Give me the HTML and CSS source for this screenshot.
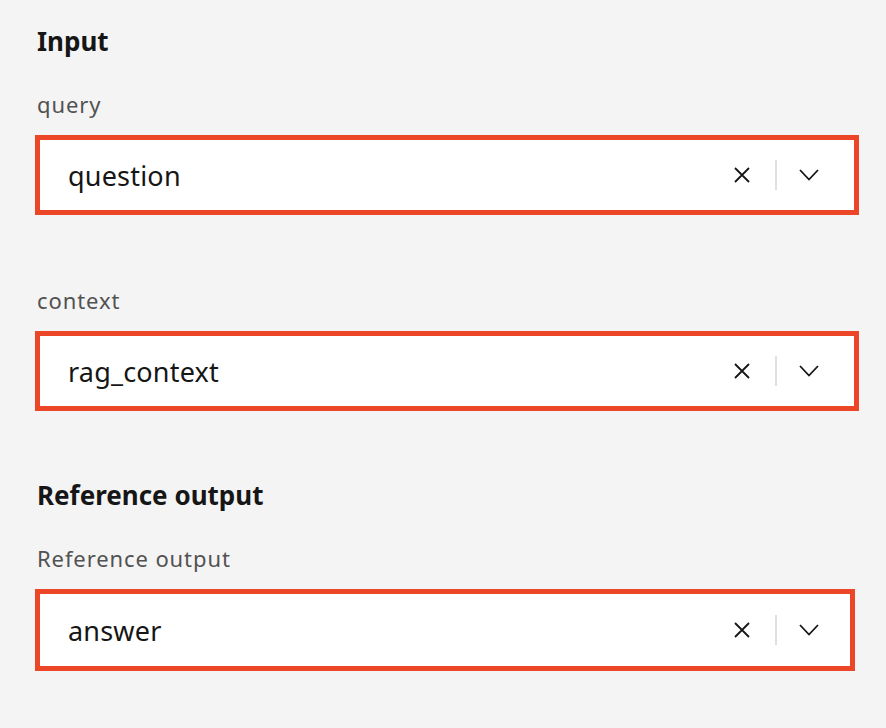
FILE: index.html
```html
<!DOCTYPE html>
<html lang="en">
<head>
<meta charset="utf-8">
<title>Mapping</title>
<link rel="stylesheet" href="styles.css">
</head>
<body>
<main class="panel">
  <section class="section">
    <h2 class="section-title">Input</h2>
    <div class="field">
      <label class="field-label">query</label>
      <div class="combo">
        <span class="combo-value">question</span>
        <button class="combo-clear" aria-label="Clear">
          <svg width="16" height="16" viewBox="0 0 16 16"><path d="M1 1 L15 15 M15 1 L1 15" stroke="#161616" stroke-width="1.8" fill="none"/></svg>
        </button>
        <span class="combo-divider"></span>
        <button class="combo-toggle" aria-label="Open">
          <svg width="20" height="12" viewBox="0 0 20 12"><path d="M1 1 L10 10.5 L19 1" stroke="#161616" stroke-width="1.8" fill="none"/></svg>
        </button>
      </div>
    </div>
    <div class="field field-gap">
      <label class="field-label">context</label>
      <div class="combo">
        <span class="combo-value">rag_context</span>
        <button class="combo-clear" aria-label="Clear">
          <svg width="16" height="16" viewBox="0 0 16 16"><path d="M1 1 L15 15 M15 1 L1 15" stroke="#161616" stroke-width="1.8" fill="none"/></svg>
        </button>
        <span class="combo-divider"></span>
        <button class="combo-toggle" aria-label="Open">
          <svg width="20" height="12" viewBox="0 0 20 12"><path d="M1 1 L10 10.5 L19 1" stroke="#161616" stroke-width="1.8" fill="none"/></svg>
        </button>
      </div>
    </div>
  </section>
  <section class="section section-next">
    <h2 class="section-title">Reference output</h2>
    <div class="field">
      <label class="field-label">Reference output</label>
      <div class="combo combo-last">
        <span class="combo-value">answer</span>
        <button class="combo-clear" aria-label="Clear">
          <svg width="16" height="16" viewBox="0 0 16 16"><path d="M1 1 L15 15 M15 1 L1 15" stroke="#161616" stroke-width="1.8" fill="none"/></svg>
        </button>
        <span class="combo-divider"></span>
        <button class="combo-toggle" aria-label="Open">
          <svg width="20" height="12" viewBox="0 0 20 12"><path d="M1 1 L10 10.5 L19 1" stroke="#161616" stroke-width="1.8" fill="none"/></svg>
        </button>
      </div>
    </div>
  </section>
</main>
</body>
</html>
```

FILE: styles.css
```css
html, body {
  margin: 0;
  padding: 0;
  background: #f4f4f4;
}

body {
  font-family: "Noto Sans", "Liberation Sans", sans-serif;
  color: #161616;
  width: 886px;
  height: 728px;
  overflow: hidden;
}

.panel {
  padding: 23px 27px 0 35px;
}

.section-title {
  margin: 0 0 0 2px;
  font-size: 26px;
  line-height: 36px;
  font-weight: 700;
  color: #161616;
}

.section-next {
  margin-top: 66px;
}

.field {
  margin-top: 31px;
}

.field-gap {
  margin-top: 71px;
}

.field-label {
  display: block;
  margin: 0 0 17px 2px;
  font-size: 22px;
  line-height: 28px;
  color: #525252;
  letter-spacing: 0.9px;
}

.combo {
  box-sizing: border-box;
  display: flex;
  align-items: center;
  height: 80px;
  padding: 0 21px 0 28px;
  background: #ffffff;
  border: 5px solid #ec4629;
}

.combo-last {
  height: 82px;
  margin-right: 4px;
  padding-right: 17px;
}

.combo-value {
  flex: 1;
  font-size: 27px;
  letter-spacing: 0.2px;
  color: #161616;
}

.combo-clear,
.combo-toggle {
  display: flex;
  align-items: center;
  justify-content: center;
  width: 48px;
  height: 48px;
  padding: 0;
  border: 0;
  background: transparent;
}

.combo-divider {
  width: 2px;
  height: 30px;
  margin: 0 8px 0 9px;
  background: #e0e0e0;
}
```
